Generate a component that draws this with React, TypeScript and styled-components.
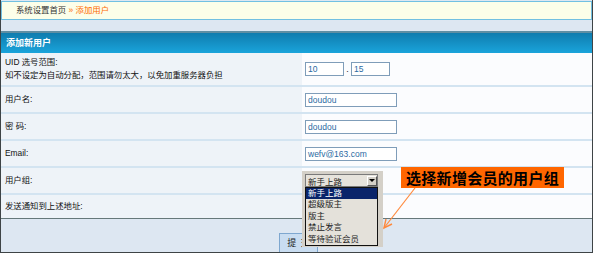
import styled, { createGlobalStyle } from "styled-components";

const GlobalStyle = createGlobalStyle`
  html, body {
    margin: 0;
    padding: 0;
    background: #fff;
  }
  body {
    font-family: "Liberation Sans", "Noto Sans CJK SC", sans-serif;
  }
`;

const Frame = styled.div`
  position: relative;
  width: 593px;
  height: 253px;
  box-sizing: border-box;
  border: 1px solid #3e4446;
  border-top: none;
  background: #dde7f2;
  overflow: hidden;
  display: flex;
  flex-direction: column;
`;

const Crumb = styled.div`
  margin: 1px 0 11px;
  height: 19px;
  box-sizing: border-box;
  border: 1px solid #72c0e2;
  background: #fcfee9;
  padding-left: 14px;
  font-size: 8.4px;
  line-height: 17px;
  color: #333;
  span {
    color: #ff6a00;
  }
`;

const Caption = styled.div`
  height: 22px;
  box-sizing: border-box;
  border-top: 2px solid #5f8ea3;
  background: linear-gradient(#0f7cae, #1aa4db);
  color: #fff;
  font-weight: bold;
  font-size: 9px;
  line-height: 20px;
  padding-left: 5px;
`;

const Row = styled.div<{ $h: number; $last?: boolean }>`
  display: grid;
  grid-template-columns: 301px 1fr;
  height: ${(p) => p.$h}px;
  border-bottom: ${(p) => (p.$last ? "1px solid #66787a" : "2px solid #d3e4f1")};
`;

const Label = styled.div`
  background: #eef3f8;
  padding-left: 4px;
  display: flex;
  flex-direction: column;
  justify-content: center;
  font-size: 8.4px;
  line-height: 13px;
  color: #111;
`;

const Value = styled.div`
  background: #fbfcfe;
  padding-left: 3px;
  display: flex;
  align-items: center;
`;

const Input = styled.div<{ $w: number }>`
  width: ${(p) => p.$w}px;
  height: 14px;
  box-sizing: border-box;
  border: 1px solid #7f9db9;
  background: #fff;
  padding-left: 2px;
  font-size: 8.5px;
  line-height: 12px;
  color: #2b6aa2;
`;

const Dot = styled.span`
  width: 7px;
  text-align: center;
  font-size: 9px;
  line-height: 14px;
  color: #222;
`;

const SelectWrap = styled.div`
  position: relative;
  z-index: 2;
  width: 73px;
  height: 13px;
`;

const Backdrop = styled.div`
  position: absolute;
  left: -3px;
  top: -3px;
  width: 81px;
  height: 76px;
  background: #d4d0c8;
`;

const SelectBox = styled.div`
  position: relative;
  height: 13px;
  box-sizing: border-box;
  border: 1px solid #7a7a7a;
  background: #e6e3dc;
  display: flex;
  align-items: center;
  font-size: 8.5px;
  color: #222;
  padding-left: 2px;
`;

const SelectText = styled.span`
  flex: 1;
`;

const DropBtn = styled.div`
  width: 10px;
  height: 10px;
  box-sizing: border-box;
  border: 1px solid;
  border-color: #fff #555 #555 #fff;
  background: #d4d0c8;
  display: flex;
  align-items: center;
  justify-content: center;
  &::after {
    content: "";
    border-left: 3px solid transparent;
    border-right: 3px solid transparent;
    border-top: 3px solid #000;
  }
`;

const ListBox = styled.div`
  position: absolute;
  left: 0;
  top: 13px;
  width: 73px;
  box-sizing: border-box;
  border: 1px solid #111;
  background: #e4e1da;
`;

const Option = styled.div<{ $on?: boolean }>`
  height: 11.4px;
  padding-left: 2px;
  font-size: 8.5px;
  line-height: 11.4px;
  color: ${(p) => (p.$on ? "#fff" : "#222")};
  background: ${(p) => (p.$on ? "#0a246a" : "transparent")};
`;

const Footer = styled.div`
  flex: 1;
  display: flex;
  justify-content: center;
  padding-top: 14px;
  overflow: hidden;
`;

const Submit = styled.div`
  height: 20px;
  box-sizing: border-box;
  padding: 0 7px;
  margin-left: 4px;
  border: 1px solid #7ea7cf;
  background: #c9ddf1;
  font-size: 9px;
  line-height: 18px;
  color: #222;
  word-spacing: 2px;
`;

const Callout = styled.div`
  position: absolute;
  left: 400px;
  top: 167px;
  width: 163px;
  height: 21px;
  background: #ff6600;
  color: #000;
  font-family: "Noto Sans CJK SC", sans-serif;
  font-weight: 700;
  font-size: 15px;
  line-height: 21px;
  text-align: center;
  letter-spacing: 0.3px;
`;

const Pointer = styled.svg`
  position: absolute;
  left: 377px;
  top: 184px;
`;

const groups = ["新手上路", "超级版主", "版主", "禁止发言", "等待验证会员"];

export default function App() {
  return (
    <>
      <GlobalStyle />
      <Frame>
        <Crumb>
          系统设置首页 <span>» 添加用户</span>
        </Crumb>
        <Caption>添加新用户</Caption>

        <Row $h={32}>
          <Label>
            <div>UID 选号范围:</div>
            <div>如不设定为自动分配，范围请勿太大，以免加重服务器负担</div>
          </Label>
          <Value>
            <Input $w={39}>10</Input>
            <Dot>.</Dot>
            <Input $w={39}>15</Input>
          </Value>
        </Row>
        <Row $h={25}>
          <Label>用户名:</Label>
          <Value>
            <Input $w={92}>doudou</Input>
          </Value>
        </Row>
        <Row $h={25}>
          <Label>密 码:</Label>
          <Value>
            <Input $w={92}>doudou</Input>
          </Value>
        </Row>
        <Row $h={25}>
          <Label>Email:</Label>
          <Value>
            <Input $w={92}>wefv@163.com</Input>
          </Value>
        </Row>
        <Row $h={25}>
          <Label>用户组:</Label>
          <Value>
            <SelectWrap>
              <Backdrop />
              <SelectBox>
                <SelectText>新手上路</SelectText>
                <DropBtn />
              </SelectBox>
              <ListBox>
                {groups.map((g, i) => (
                  <Option key={g} $on={i === 0}>
                    {g}
                  </Option>
                ))}
              </ListBox>
            </SelectWrap>
          </Value>
        </Row>
        <Row $h={23} $last>
          <Label>发送通知到上述地址:</Label>
          <Value />
        </Row>

        <Footer>
          <Submit>提 交</Submit>
        </Footer>

        <Callout>选择新增会员的用户组</Callout>
        <Pointer width="42" height="48" viewBox="0 0 42 48">
          <line x1="37" y1="4" x2="6" y2="44" stroke="#ff8a3d" strokeWidth="1.2" />
          <polyline points="14,40 6,44 8,35" fill="none" stroke="#ff8a3d" strokeWidth="1.4" />
        </Pointer>
      </Frame>
    </>
  );
}
